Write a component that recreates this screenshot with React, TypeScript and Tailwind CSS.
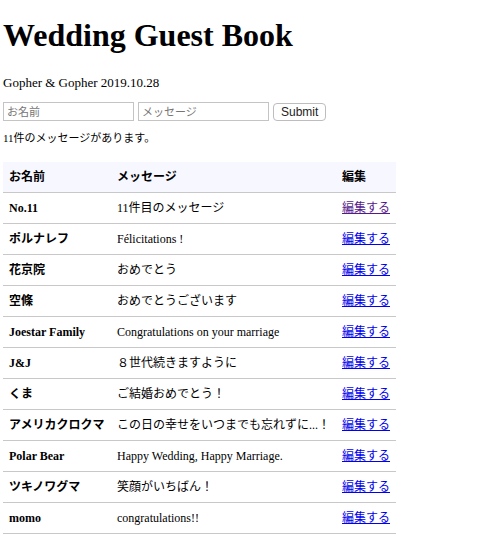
import React from "react";

interface Entry {
  name: string;
  message: string;
  visited?: boolean;
}

const entries: Entry[] = [
  { name: "No.11", message: "11件目のメッセージ", visited: true },
  { name: "ポルナレフ", message: "Félicitations !" },
  { name: "花京院", message: "おめでとう" },
  { name: "空條", message: "おめでとうございます" },
  { name: "Joestar Family", message: "Congratulations on your marriage" },
  { name: "J&J", message: "８世代続きますように" },
  { name: "くま", message: "ご結婚おめでとう！" },
  { name: "アメリカクロクマ", message: "この日の幸せをいつまでも忘れずに...！" },
  { name: "Polar Bear", message: "Happy Wedding, Happy Marriage." },
  { name: "ツキノワグマ", message: "笑顔がいちばん！" },
  { name: "momo", message: "congratulations!!" },
];

const serif = "font-['Liberation_Serif','Noto_Sans_CJK_JP',serif]";
const sans = "font-['Liberation_Sans','Noto_Sans_CJK_JP',sans-serif]";

export default function App() {
  return (
    <div className={`min-h-screen bg-white px-[3px] text-black ${serif}`}>
      <h1 className="pt-[17px] text-[32px] font-bold leading-[37px]">Wedding Guest Book</h1>
      <p className="mt-[21px] text-[13px] leading-[15px]">Gopher &amp; Gopher 2019.10.28</p>

      {/* Form */}
      <form className="mt-[12px] flex items-center gap-[4px]" onSubmit={(e) => e.preventDefault()}>
        <input
          placeholder="お名前"
          className={`h-[19px] w-[131px] border border-[#c4c4c4] px-[3px] text-[11px] placeholder:text-[#757575] ${sans}`}
        />
        <input
          placeholder="メッセージ"
          className={`h-[19px] w-[131px] border border-[#c4c4c4] px-[3px] text-[11px] placeholder:text-[#757575] ${sans}`}
        />
        <button
          type="submit"
          className={`h-[18px] rounded-[4px] border border-[#bdbdbd] bg-white px-[7px] text-[12px] leading-[16px] text-[#222] ${sans}`}
        >
          Submit
        </button>
      </form>

      <p className="mt-[10px] text-[11px] leading-[14px]">11件のメッセージがあります。</p>

      {/* Table */}
      <table className="mt-[17px] w-[393px] table-fixed border-collapse text-left text-[12px]">
        <colgroup>
          <col className="w-[108px]" />
          <col className="w-[225px]" />
          <col className="w-[60px]" />
        </colgroup>
        <thead>
          <tr className="bg-[#f7f7ff] border-b border-[#c8c8c8]">
            <th className="h-[30px] px-[6px] font-bold">お名前</th>
            <th className="h-[30px] px-[6px] font-bold">メッセージ</th>
            <th className="h-[30px] px-[6px] font-bold">編集</th>
          </tr>
        </thead>
        <tbody>
          {entries.map((e, i) => (
            <tr key={i} className="border-b border-[#c8c8c8]">
              <td className="h-[31px] whitespace-nowrap px-[6px] font-bold">{e.name}</td>
              <td className="h-[31px] whitespace-nowrap px-[6px]">{e.message}</td>
              <td className="h-[31px] whitespace-nowrap px-[6px]">
                <a href="#" className={e.visited ? "text-[#551a8b] underline" : "text-[#0000ee] underline"}>
                  編集する
                </a>
              </td>
            </tr>
          ))}
        </tbody>
      </table>
    </div>
  );
}
